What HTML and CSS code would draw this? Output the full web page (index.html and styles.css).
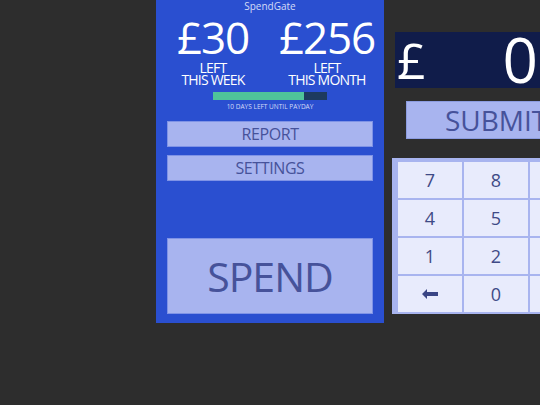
FILE: index.html
```html
<!DOCTYPE html>
<html>
<head>
<meta charset="utf-8">
<link rel="stylesheet" href="styles.css">
</head>
<body>
<div class="stage">
  <div class="panel">
    <div class="brand">SpendGate</div>
    <div class="amounts">
      <div class="amount">
        <div class="big">£30</div>
        <div class="label">LEFT</div>
        <div class="label">THIS WEEK</div>
      </div>
      <div class="amount">
        <div class="big">£256</div>
        <div class="label">LEFT</div>
        <div class="label">THIS MONTH</div>
      </div>
    </div>
    <div class="bar"><div class="fill" style="width:80%"></div></div>
    <div class="days">10 DAYS LEFT UNTIL PAYDAY</div>
    <div class="btn small first">REPORT</div>
    <div class="btn small second">SETTINGS</div>
    <div class="btn spend">SPEND</div>
  </div>
  <div class="entry">
    <div class="input"><span class="cur">£</span><span class="val">0</span></div>
    <div class="btn submit">SUBMIT</div>
    <div class="keypad">
      <div class="key">7</div><div class="key">8</div><div class="key">9</div>
      <div class="key">4</div><div class="key">5</div><div class="key">6</div>
      <div class="key">1</div><div class="key">2</div><div class="key">3</div>
      <div class="key arrow"><svg width="16" height="10" viewBox="0 0 16 10"><path d="M0 5 L5 0 L5 3 L16 3 L16 7 L5 7 L5 10 Z" fill="#3a4585"/></svg></div><div class="key">0</div><div class="key">.</div>
    </div>
  </div>
</div>
</body>
</html>
```
FILE: styles.css
```css
html, body {
  margin: 0;
  padding: 0;
  width: 540px;
  height: 405px;
  overflow: hidden;
  background: #2d2d2d;
  font-family: "Open Sans", "DejaVu Sans", sans-serif;
}
.stage {
  display: flex;
  align-items: flex-start;
  padding-left: 156px;
  width: 800px;
}
.panel {
  width: 228px;
  height: 323px;
  background: #2a4fd0;
  box-sizing: border-box;
  padding: 0 11px;
  display: flex;
  flex-direction: column;
  flex-shrink: 0;
}
.brand {
  color: #d4dbf7;
  font-size: 10px;
  text-align: center;
  height: 13px;
  line-height: 12px;
}
.amounts {
  display: flex;
  margin: 0 -11px;
}
.amount {
  width: 114px;
  text-align: center;
  color: #ffffff;
}
.big {
  font-size: 44px;
  line-height: 48px;
  letter-spacing: -1.2px;
  height: 49px;
}
.label {
  font-size: 14px;
  line-height: 12px;
  height: 12px;
  letter-spacing: -0.8px;
}
.bar {
  width: 114px;
  height: 8px;
  margin: 6px auto 0;
  background: #1d3a5e;
}
.fill {
  height: 100%;
  background: #4fc39a;
}
.days {
  color: #d4dbf7;
  font-size: 6.5px;
  text-align: center;
  margin-top: 2px;
  height: 10px;
  line-height: 9px;
}
.btn {
  background: #a8b4ef;
  border: 1px solid #7f93e6;
  color: #46529a;
  text-align: center;
  box-sizing: border-box;
}
.small {
  height: 26px;
  font-size: 16px;
  line-height: 24px;
  letter-spacing: -0.4px;
}
.first { margin-top: 9px; }
.second { margin-top: 8px; }
.spend {
  margin-top: 57px;
  height: 76px;
  font-size: 41px;
  line-height: 74px;
  letter-spacing: -1px;
}
.entry {
  margin-left: 8px;
  width: 400px;
  display: flex;
  flex-direction: column;
}
.input {
  margin-left: 3px;
  margin-top: 32px;
  height: 56px;
  width: 200px;
  background: #101c4a;
  color: #ffffff;
  display: flex;
  align-items: center;
  font-size: 50px;
  line-height: 56px;
}
.cur { padding-left: 2px; }
.val {
  margin-left: 77px;
  font-size: 62px;
  line-height: 56px;
  padding-bottom: 2px;
}
.submit {
  margin-left: 14px;
  margin-top: 13px;
  height: 38px;
  width: 200px;
  font-size: 28px;
  line-height: 36px;
  text-align: left;
  padding-left: 38px;
  border-color: #8c9ce0;
}
.keypad {
  margin-top: 19px;
  width: 260px;
  height: 156px;
  box-sizing: border-box;
  background: #a8b4ef;
  padding: 4px 4px 2px 6px;
  display: grid;
  grid-template-columns: 64px 64px 64px;
  grid-auto-rows: 36px;
  gap: 2px;
}
.key {
  background: #e8ebfc;
  color: #3f4a86;
  font-size: 18px;
  display: flex;
  align-items: center;
  justify-content: center;
}
.arrow svg {
  display: block;
}
```
